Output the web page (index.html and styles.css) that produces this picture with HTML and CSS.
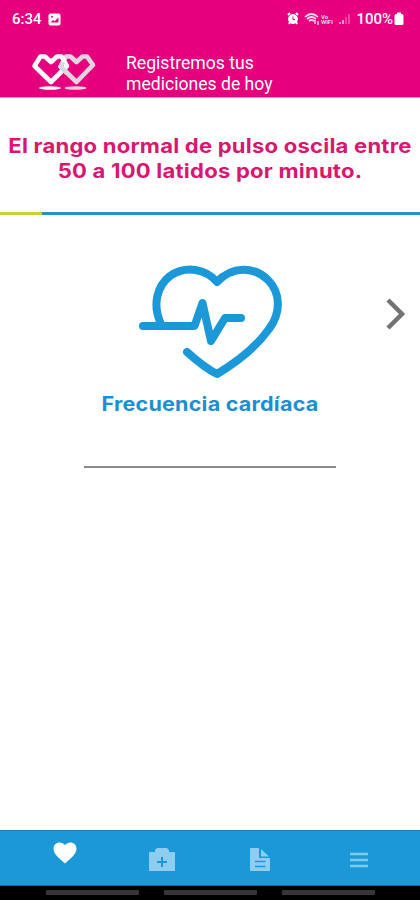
FILE: index.html
```html
<!DOCTYPE html>
<html lang="es">
<head>
    <meta charset="UTF-8">
    <meta name="viewport" content="width=device-width, initial-scale=1.0">
    <title>Frecuencia cardíaca</title>
    <link rel="stylesheet" href="styles.css">
</head>
<body>
    <div class="app">
        <header class="top">
            <div class="status">
                <span class="time">6:34</span>
                <svg class="photo" width="13" height="13" viewBox="0 0 13 13">
                    <rect x="0.5" y="0.5" width="12" height="12" rx="2" fill="#fff"/>
                    <path d="M2.5 9.5 L5 7 L6.5 8.2 L10.5 4.5 V9.5 Z" fill="#e6007e"/>
                    <circle cx="4" cy="3.8" r="1" fill="#e6007e"/>
                </svg>
                <svg class="signals" width="64" height="16" viewBox="0 0 64 16">
                    <g fill="none" stroke="#fff">
                        <circle cx="6" cy="8" r="4.500" fill="#fff"/>
                        <path d="M1 4 L3 2 M11 4 L9 2 M2 13 L3 11 M10 13 L9 11" stroke-width="2"/>
                        <path d="M6 5.5 V8.5 H8" stroke="#e6007e"/>
                        <path d="M18 6 Q24.500 0 31 6 M20 8 Q24.500 4 29 8 M22 10 Q24.500 8 27 10" stroke-width="1.700" opacity=".85"/>
                        <path d="M28 9 V13 M31 14 V10" stroke-width="1.500" opacity=".8"/>
                    </g>
                    <text x="34" y="7.500" class="tiny">Vo</text>
                    <text x="34" y="13" class="tiny">WiFi</text>
                    <path d="M53 13 V11 M56 13 V9" stroke="#fff" stroke-width="2" opacity=".6"/>
                    <path d="M59 13 V6 M62 13 V3" stroke="#fff" stroke-width="2" opacity=".28"/>
                </svg>
                <span class="percent">100%</span>
                <svg width="10" height="14" viewBox="0 0 10 14">
                    <path d="M3 .5 H7 V2 H8 Q9.500 2 9.500 3.500 V11.500 Q9.500 13 8 13 H2 Q.5 13 .5 11.500 V3.500 Q.5 2 2 2 H3 Z" fill="#fff"/>
                </svg>
            </div>
            <div class="heading">
                <svg class="logo" width="66" height="40" viewBox="0 0 66 40">
                    <g fill="none" stroke-width="4.600" stroke-linejoin="round">
                        <path d="M45.500 10 L51.500 4.500 L56 4.500 L62 13 L45.500 30 L29.500 14.500 L35 4.500 L39.500 4.500 Z" stroke="#e3d5df"/>
                        <path d="M20 10 L26 4.500 L30.500 4.500 L36 14 L20 30 L3.500 14 L9.500 4.500 L14 4.500 Z" stroke="#fff"/>
                        <path d="M36 21 L29.500 14.500 L32 10" stroke="#e3d5df"/>
                    </g>
                    <ellipse cx="19" cy="36" rx="11" ry="1.700" fill="#fff"/>
                    <ellipse cx="44.500" cy="36" rx="11" ry="1.700" fill="#f0cfe1"/>
                </svg>
                <p>Registremos tus<br>mediciones de hoy</p>
            </div>
        </header>

        <main>
            <h1>El rango normal de pulso oscila entre<br>50 a 100 latidos por minuto.</h1>
            <div class="progress"><div class="progress-done"></div></div>
            <section class="measure">
                <svg class="heart" width="160" height="130" viewBox="0 0 160 130">
                    <g fill="none" stroke="#1b98d8" stroke-width="8" stroke-linecap="round" stroke-linejoin="round">
                        <path d="M31 69 C22 50 27 31 40 21 C56 10 76 14 87 27 C102 11 124 11 138 25 C151 38 151 58 139 74 C127 91 107 107 87 119 C77 114 67 106 57 97"/>
                        <path d="M13 71 H64.500 L72.500 48 L81 86 L95 63 H111"/>
                    </g>
                </svg>
                <svg class="next" width="20" height="34" viewBox="0 0 20 34">
                    <path d="M2 3 L16 17 L2 31" fill="none" stroke="#737373" stroke-width="4.500"/>
                </svg>
                <h2>Frecuencia cardíaca</h2>
                <div class="field"></div>
            </section>
        </main>

        <nav class="tabs">
            <svg class="tab-active" width="24" height="22" viewBox="0 0 24 22">
                <path d="M12 21.500 C7 17 .5 12.500 .5 6.500 C.5 0 8.500 -1.500 12 3 C15.500 -1.500 23.500 0 23.500 6.500 C23.500 12.500 17 17 12 21.500 Z" fill="#fff"/>
            </svg>
            <svg width="26" height="24" viewBox="0 0 26 24">
                <path d="M0 5 Q0 4 1 4 H6 V2 L8 0 H18 L20 2 V4 H25 Q26 4 26 5 V23 H0 Z" fill="#8dcdf0"/>
                <path d="M13 9 V19 M8 14 H18" stroke="#1b98d8" stroke-width="2"/>
            </svg>
            <svg width="20" height="24" viewBox="0 0 20 24">
                <path d="M1 0 H9 V10 H20 V22 Q20 23 19 23 H1 Q0 23 0 22 V1 Q0 0 1 0 Z M11 1 L19 8.500 H11 Z" fill="#8dcdf0"/>
                <path d="M5 13.500 H15.500 M5 18.500 H15.500" stroke="#1b98d8" stroke-width="1.600"/>
            </svg>
            <svg width="18" height="16" viewBox="0 0 18 16">
                <path d="M0 2 H18 M0 8 H18 M0 14 H18" stroke="#7ccbf2" stroke-width="2.600"/>
            </svg>
        </nav>
        <div class="system">
            <span></span>
            <span></span>
            <span></span>
        </div>
    </div>
</body>
</html>
```
FILE: styles.css
```css
* {
    box-sizing: border-box;
}

body {
    margin: 0;
    background-color: #fff;
    font-family: Roboto, sans-serif;
}

.app {
    display: flex;
    flex-direction: column;
    height: 900px;
    width: 420px;
    overflow: hidden;
}

.top {
    height: 98px;
    background-color: #e6007e;
    border-bottom: 1px solid #ef8fc2;
    color: #fff;
}

.status {
    display: flex;
    align-items: center;
    height: 38px;
    padding: 0 16px 0 12px;
    font-size: 15px;
    font-weight: 500;
}

.photo {
    margin-left: 6px;
}

.signals {
    margin-left: auto;
    margin-right: 5px;
}

.tiny {
    font-size: 6px;
    font-weight: 700;
    fill: #fff;
    opacity: 0.8;
}

.percent {
    margin-right: 1px;
}

.heading {
    display: flex;
    padding: 14px 0 0 31px;
}

.heading p {
    margin: 1px 0 0 29px;
    font-size: 17.6px;
    line-height: 20.5px;
}

main {
    flex: 1;
    font-family: Inter, sans-serif;
    text-align: center;
}

h1, h2 {
    font-size: 19.5px;
    font-weight: 650;
    letter-spacing: 0.2px;
    white-space: nowrap;
}

h1 {
    margin: 36px 0 28px;
    color: #d91670;
    line-height: 25px;
    transform: scaleX(1.13);
}

.progress {
    height: 3px;
    background-color: #278fce;
}

.progress-done {
    width: 42px;
    height: 3px;
    background-color: #c7d32f;
}

.measure {
    display: grid;
    grid-template-columns: 130px 160px 130px;
    padding-top: 40px;
}

.next {
    justify-self: end;
    margin: 42px 14px 0 0;
}

h2 {
    grid-column: 1 / 4;
    margin: 6px 0 0;
    color: #1b8fd0;
    line-height: 26px;
    transform: scaleX(1.105);
}

.heart {
    grid-column: 2;
}

.field {
    grid-column: 1 / 4;
    justify-self: center;
    width: 252px;
    height: 2px;
    margin-top: 49px;
    background-color: #8b8b8b;
}

.tabs {
    display: grid;
    grid-template-columns: 114px 80px 116px 82px;
    align-items: center;
    justify-items: center;
    height: 56px;
    padding: 4px 0 0 8px;
    background-color: #1b98d8;
    border-top: 1px solid #1680b7;
    border-bottom: 1px solid #126c9b;
}

.tab-active {
    margin-bottom: 14px;
}

.system {
    display: flex;
    justify-content: center;
    gap: 25px;
    height: 14px;
    padding-top: 4px;
    background-color: #000;
}

.system span {
    width: 93px;
    height: 5px;
    border-radius: 1px;
    background-color: #393536;
}
```
